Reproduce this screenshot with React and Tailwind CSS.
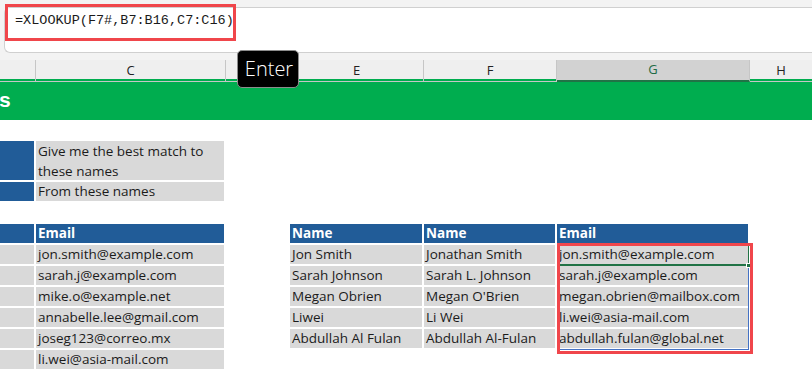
import React from "react";

const cols = "grid-cols-[36px_190px_64px_134px_133px_193px_62px]";

const leftEmails = [
  "jon.smith@example.com",
  "sarah.j@example.com",
  "mike.o@example.net",
  "annabelle.lee@gmail.com",
  "joseg123@correo.mx",
  "li.wei@asia-mail.com",
];

const matches = [
  ["Jon Smith", "Jonathan Smith", "jon.smith@example.com"],
  ["Sarah Johnson", "Sarah L. Johnson", "sarah.j@example.com"],
  ["Megan Obrien", "Megan O'Brien", "megan.obrien@mailbox.com"],
  ["Liwei", "Li Wei", "li.wei@asia-mail.com"],
  ["Abdullah Al Fulan", "Abdullah Al-Fulan", "abdullah.fulan@global.net"],
];

const Cell = ({ kind, children, wrap }) => {
  if (!kind) return <div />;
  const bg = kind === "blue" ? "bg-[#215c98] text-white font-bold" : "bg-[#d9d9d9] text-[#1b1b1b]";
  return (
    <div
      className={`border-r-2 border-b-2 border-white pl-[2px] overflow-hidden ${bg} ${
        wrap ? "leading-[20px]" : "flex items-center whitespace-nowrap"
      }`}
    >
      {children}
    </div>
  );
};

const ColHead = ({ label, selected, last }) => (
  <div
    className={`flex items-center justify-center text-[13px] ${
      selected
        ? "bg-[#d2d2d2] text-[#1e6b45] border-b-2 border-[#217346]"
        : "text-[#222] border-b border-[#c6c6c6]"
    } ${last ? "" : "border-r border-r-[#c6c6c6]"}`}
  >
    {label}
  </div>
);

export default function App() {
  return (
    <div className="relative w-[812px] h-[370px] overflow-hidden bg-white font-['Open_Sans',sans-serif] text-[13.5px]">
      {/* formula bar */}
      <div className="h-[60px] bg-[#f3f3f3] pt-[7px] pl-[4px]">
        <div className="h-[46px] bg-white border border-r-0 border-[#d0d0d0] rounded-l-[6px] pl-[10px] pt-[3px] font-['Liberation_Mono',monospace] text-[13.5px] leading-[20px] text-[#1b1b1b]">
          =XLOOKUP(F7#,B7:B16,C7:C16)
        </div>
      </div>

      {/* column headers */}
      <div className={`grid ${cols} h-[19px] bg-[#efefef]`}>
        <ColHead label="" />
        <ColHead label="C" />
        <ColHead label="" />
        <ColHead label="E" />
        <ColHead label="F" />
        <ColHead label="G" selected />
        <ColHead label="H" last />
      </div>

      {/* title row */}
      <div className="h-[41px] bg-[#00ad4f] flex items-center">
        <span className="text-white font-bold text-[21px] leading-none -ml-[1px] font-['Liberation_Sans',sans-serif]">s</span>
      </div>

      {/* sheet body */}
      <div className={`grid ${cols} grid-rows-[21px_41px_21px_21px_21px_21px_21px_21px_21px_21px_21px]`}>
        {/* row 2 */}
        <Cell /><Cell /><Cell /><Cell /><Cell /><Cell /><Cell />
        {/* row 3 */}
        <Cell kind="blue" />
        <Cell kind="gray" wrap>Give me the best match to these names</Cell>
        <Cell /><Cell /><Cell /><Cell /><Cell />
        {/* row 4 */}
        <Cell kind="blue" />
        <Cell kind="gray">From these names</Cell>
        <Cell /><Cell /><Cell /><Cell /><Cell />
        {/* row 5 */}
        <Cell /><Cell /><Cell /><Cell /><Cell /><Cell /><Cell />
        {/* row 6 headers */}
        <Cell kind="blue" />
        <Cell kind="blue">Email</Cell>
        <Cell />
        <Cell kind="blue">Name</Cell>
        <Cell kind="blue">Name</Cell>
        <Cell kind="blue">Email</Cell>
        <Cell />
        {/* rows 7-12 */}
        {leftEmails.map((email, i) => {
          const m = matches[i];
          return (
            <React.Fragment key={email}>
              <Cell kind="gray" />
              <Cell kind="gray">{email}</Cell>
              <Cell />
              <Cell kind={m ? "gray" : null}>{m && m[0]}</Cell>
              <Cell kind={m ? "gray" : null}>{m && m[1]}</Cell>
              <Cell kind={m ? "gray" : null}>{m && m[2]}</Cell>
              <Cell />
            </React.Fragment>
          );
        })}
      </div>

      {/* spill range selection */}
      <div className="absolute left-[557px] top-[245px] w-[192px] h-[105px] border-r border-b border-[#4472c4]" />
      <div className="absolute left-[557px] top-[245px] w-[192px] h-[21px] border-r border-b-2 border-[#217346]" />
      <div className="absolute left-[746px] top-[263px] w-[5px] h-[5px] bg-[#217346] border border-white" />

      {/* annotations */}
      <div className="absolute left-[5px] top-[4px] w-[231px] h-[37px] border-[3px] border-[#f0464b]" />
      <div className="absolute left-[557px] top-[243px] w-[196px] h-[111px] border-[3px] border-[#f0464b]" />
      <div className="absolute left-[237px] top-[50px] w-[62px] h-[38px] bg-black border border-[#8c8c8c] rounded-[5px] flex items-center justify-center pl-[2px] text-white font-light text-[20px] leading-none">
        Enter
      </div>
    </div>
  );
}
